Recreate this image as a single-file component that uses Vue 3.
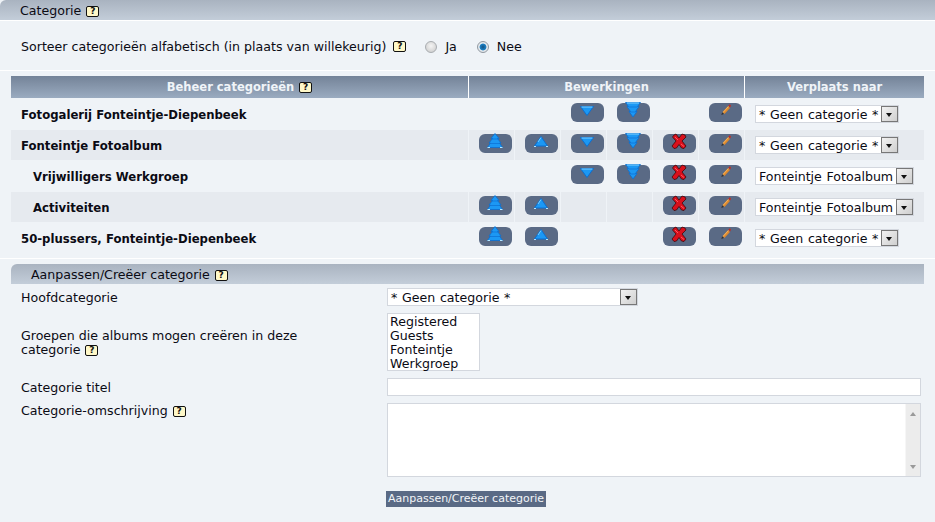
<script setup>
const rows = [
  { name: 'Fotogalerij Fonteintje-Diepenbeek', indent: false, tint: false, actions: ['', '', 'down', 'bottom', '', 'edit'], move: '* Geen categorie *' },
  { name: 'Fonteintje Fotoalbum', indent: false, tint: true, actions: ['top', 'up', 'down', 'bottom', 'del', 'edit'], move: '* Geen categorie *' },
  { name: 'Vrijwilligers Werkgroep', indent: true, tint: false, actions: ['', '', 'down', 'bottom', 'del', 'edit'], move: 'Fonteintje Fotoalbum' },
  { name: 'Activiteiten', indent: true, tint: true, actions: ['top', 'up', '', '', 'del', 'edit'], move: 'Fonteintje Fotoalbum' },
  { name: '50-plussers, Fonteintje-Diepenbeek', indent: false, tint: false, actions: ['top', 'up', '', '', 'del', 'edit'], move: '* Geen categorie *' }
]
const groups = ['Registered', 'Guests', 'Fonteintje', 'Werkgroep']
</script>

<template>
  <div class="page">
    <div class="head">Categorie <span class="help">?</span></div>
    <div class="sort">
      <span class="sort-label">Sorteer categorieën alfabetisch (in plaats van willekeurig)</span>
      <span class="help">?</span>
      <span class="radio"></span><span class="opt">Ja</span>
      <span class="radio on"></span><span class="opt">Nee</span>
    </div>

    <div class="table">
      <div class="th">Beheer categorieën <span class="help">?</span></div>
      <div class="th">Bewerkingen</div>
      <div class="th last">Verplaats naar</div>
      <template v-for="r in rows" :key="r.name">
        <div class="td name" :class="{ tint: r.tint, indent: r.indent }">{{ r.name }}</div>
        <div class="actions">
          <div v-for="(a, i) in r.actions" :key="i" class="td act" :class="{ tint: r.tint }">
            <span v-if="a" class="btn">
              <svg width="17" height="16" viewBox="0 0 17 16">
                <g v-if="a === 'up'">
                  <path d="M8 3.500 L14.500 13 L1.500 13 Z" fill="#1c98f4" stroke="#0b6fd2" stroke-width="1" />
                  <path d="M8 4.500 L5 9" stroke="#7ed2ff" stroke-width="1" />
                  <path d="M1 13.500 H3 M13 13.500 H15" stroke="#b4e6ff" stroke-width="1" />
                </g>
                <g v-if="a === 'down'">
                  <path d="M1.500 4.500 L14.500 4.500 L8 13.500 Z" fill="#1c98f4" stroke="#0b6fd2" stroke-width="1" />
                  <path d="M2.500 5 H13.500" stroke="#7ed2ff" stroke-width="1" />
                </g>
                <g v-if="a === 'top'">
                  <path d="M8 .5 L12 5.500 H10.500 L14 10 H12.500 L15.500 14.500 H.5 L3.500 10 H2 L5.500 5.500 H4 Z" fill="#1c98f4" stroke="#0b6fd2" stroke-width=".8" />
                  <path d="M5 6 H11 M3.500 10.500 H12.500" stroke="#0b6fd2" stroke-width=".7" />
                  <path d="M.5 14.500 H3 M13 14.500 H15.500" stroke="#b4e6ff" stroke-width="1" />
                </g>
                <g v-if="a === 'bottom'">
                  <path d="M.5 .5 H15.500 L12.500 4.500 H14 L10.500 9.500 H12 L8 15 L4 9.500 H5.500 L2 4.500 H3.500 Z" fill="#1c98f4" stroke="#0b6fd2" stroke-width=".8" />
                  <path d="M4 5 H12 M5.500 10 H10.500" stroke="#0b6fd2" stroke-width=".7" />
                  <path d="M2 1 H14" stroke="#7ed2ff" stroke-width="1" />
                </g>
                <g v-if="a === 'del'">
                  <path d="M3 2 L5 1 L8 5 L11 1 L14 2 L15 4 L11 8 L15 13 L13 15.500 L10.500 15 L8 11.500 L5.500 15 L3 15.500 L1 13 L5 8 L1.500 4 Z" fill="#d8101c" stroke="#300" stroke-width=".7" />
                  <path d="M4 4 L7 7 M10 11 L13 13.500" stroke="#ff5560" stroke-width="1" />
                </g>
                <g v-if="a === 'edit'">
                  <path d="M6.500 11 L12 5" stroke="#e08a2c" stroke-width="2.600" />
                  <path d="M6 10.500 L11.500 4.500" stroke="#f8c070" stroke-width=".8" />
                  <path d="M4.300 13 L5.200 10.300 L7 12 Z" fill="#33302e" />
                  <path d="M11.300 3.800 L12.800 2.300 L14 3.500 L13.200 5.600 Z" fill="#c42c20" />
                </g>
              </svg>
            </span>
          </div>
        </div>
        <div class="td move" :class="{ tint: r.tint }">
          <div class="sel"><span class="sel-text">{{ r.move }}</span><span class="arrow"></span></div>
        </div>
      </template>
    </div>

    <div class="rule"></div>

    <div class="head sub">Aanpassen/Creëer categorie <span class="help">?</span></div>
    <div class="form">
      <div class="label">Hoofdcategorie</div>
      <div class="sel wide"><span class="sel-text">* Geen categorie *</span><span class="arrow"></span></div>

      <div class="label wrap"><span>Groepen die albums mogen creëren in deze categorie <span class="help">?</span></span></div>
      <div class="list"><div v-for="g in groups" :key="g">{{ g }}</div></div>

      <div class="label">Categorie titel</div>
      <div class="field"></div>

      <div class="label top">Categorie-omschrijving <span class="help">?</span></div>
      <div class="area">
        <div class="scroll"><span class="tri up"></span><span class="tri dn"></span></div>
      </div>

      <div></div>
      <div class="submit">Aanpassen/Creëer categorie</div>
    </div>
  </div>
</template>

<style>
html, body { margin: 0; background: #eff3f7; }
</style>

<style scoped>
.page {
  width: 935px;
  height: 522px;
  overflow: hidden;
  background: #eff3f7;
  color: #0b0b14;
  font: 12.6px/14px "DejaVu Sans", Verdana, sans-serif;
}
.head {
  height: 20px;
  box-sizing: border-box;
  padding: 4px 0 0 20px;
  background: linear-gradient(#a9b3c0, #c3cdd9);
  border-radius: 6px 0 0 0;
}
.help {
  display: inline-block;
  box-sizing: border-box;
  width: 13px;
  height: 11px;
  margin-left: 1px;
  border: 1px solid #111;
  border-radius: 2px;
  background: #fff8c8;
  color: #111;
  font: bold 9px/9px "DejaVu Sans", sans-serif;
  text-align: center;
  vertical-align: 1px;
}
.sort {
  height: 51px;
  box-sizing: border-box;
  display: flex;
  align-items: center;
  padding: 2px 0 0 21px;
  border-top: 1px solid #fff;
  border-bottom: 1px solid #fff;
}
.sort .help { margin-left: 7px; }
.radio {
  box-sizing: border-box;
  width: 12px;
  height: 12px;
  margin-left: 19px;
  border-radius: 50%;
  border: 1px solid #a8acb0;
  background: radial-gradient(circle at 50% 40%, #f4f4f4, #c8c8c8);
}
.radio.on {
  margin-left: 20px;
  border-color: #9098a0;
  background: radial-gradient(circle, #14507f 0, #1c80c4 42%, #dfe6ec 54%, #f0f0f0 100%);
}
.opt { margin-left: 8px; }
.table {
  margin: 5px 11px 0;
  display: grid;
  grid-template-columns: 457px 275px 179px;
  grid-template-rows: 22px;
  grid-auto-rows: 30px;
  gap: 1px;
}
.th {
  background: linear-gradient(#748398, #9aabc0);
  color: #f0f4f8;
  font-size: 11.500px;
  font-weight: bold;
  line-height: 22px;
  text-align: center;
  box-shadow: 1px 0 0 #fff;
}
.th.last { box-shadow: none; }
.td { min-width: 0; }
.tint { background: #e6eaef; }
.name {
  display: flex;
  align-items: center;
  padding: 2px 0 0 10px;
  box-sizing: border-box;
  font-size: 11.700px;
  font-weight: bold;
}
.name.indent { padding-left: 22px; }
.actions {
  display: grid;
  grid-template-columns: repeat(6, 1fr);
  column-gap: 1px;
}
.act {
  padding: 4px 0 0 10px;
}
.btn {
  display: block;
  width: 33px;
  height: 19px;
  border-radius: 6px;
  background: #5a6a85;
  padding-left: 8px;
  box-sizing: border-box;
}
.btn svg { display: block; overflow: visible; transform: translateY(-1px); }
.move {
  display: flex;
  align-items: flex-start;
  padding: 6px 0 0 10px;
}
.sel {
  display: flex;
  height: 18px;
  box-sizing: border-box;
  border: 1px solid #d3d7de;
  background: #fff;
  line-height: 18px;
}
.sel-text {
  padding: 0 3px 0 3px;
  white-space: nowrap;
  word-spacing: .7px;
  flex: 1;
}
.arrow {
  box-sizing: border-box;
  width: 17px;
  height: 16px;
  border: 1px solid #777;
  background: linear-gradient(135deg, #f2f2f2, #cfcfcf);
  position: relative;
  flex: none;
}
.arrow::after {
  content: "";
  position: absolute;
  left: 4px;
  top: 6px;
  border: 3.500px solid transparent;
  border-top: 4px solid #111;
  border-bottom: 0;
}
.rule {
  height: 1px;
  margin-top: 5px;
  background: #fff;
}
.head.sub {
  margin: 5px 11px 0;
  padding-left: 20px;
}
.form {
  display: grid;
  grid-template-columns: 366px 534px;
  row-gap: 7px;
  padding: 4px 14px 0 21px;
}
.label {
  display: flex;
  align-items: center;
  padding-top: 1px;
}
.label.wrap { max-width: 300px; }
.label.top { display: block; margin-top: 0; height: 14px; }
.sel.wide { width: 251px; }
.list {
  box-sizing: border-box;
  width: 93px;
  height: 58px;
  border: 1px solid #d3d7de;
  background: #fff;
  padding: 1px 0 0 2px;
  line-height: 14px;
}
.field {
  box-sizing: border-box;
  height: 18px;
  border: 1px solid #d3d7de;
  background: #fff;
}
.area {
  box-sizing: border-box;
  height: 74px;
  border: 1px solid #d3d7de;
  background: #fff;
  display: flex;
  justify-content: flex-end;
}
.scroll {
  box-sizing: border-box;
  width: 15px;
  background: #ececec;
  border-left: 1px solid #f6f6f6;
  display: flex;
  flex-direction: column;
  justify-content: space-between;
  align-items: center;
  padding: 8px 0 7px;
}
.tri { width: 0; height: 0; border: 3.500px solid transparent; }
.tri.up { border-top: 0; border-bottom: 4px solid #9a9a9a; }
.tri.dn { border-bottom: 0; border-top: 4px solid #9a9a9a; }
.submit {
  margin: 7px 0 0 -1px;
  width: 160px;
  height: 16px;
  background: #5a6a85;
  color: #f2f5f8;
  font-size: 11px;
  line-height: 16px;
  text-align: center;
  white-space: nowrap;
}
</style>
